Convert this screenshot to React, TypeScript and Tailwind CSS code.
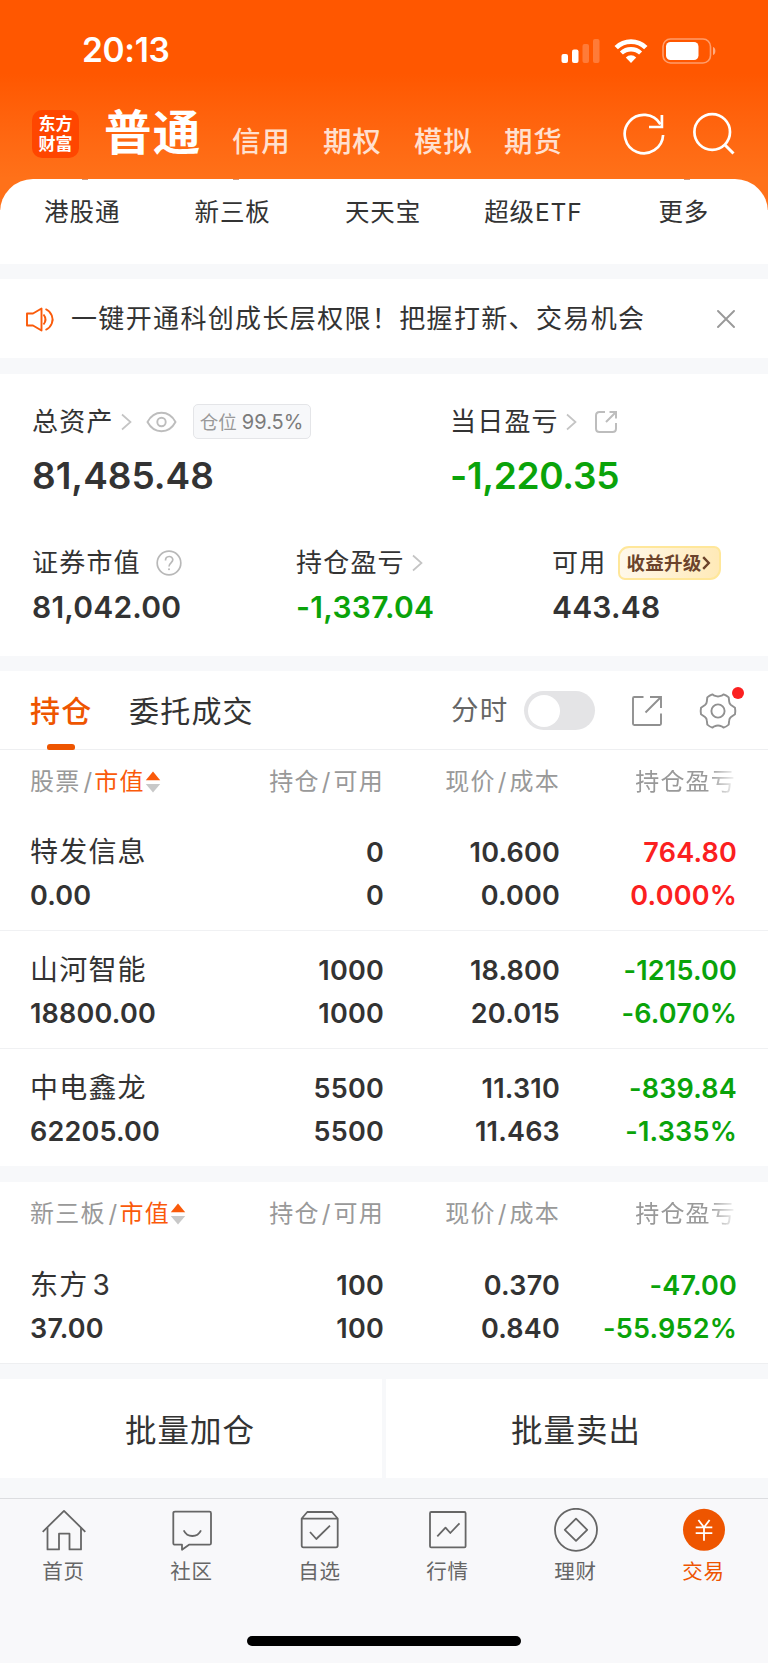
import type { ReactNode } from 'react';

const quickLinks = [
  { label: '港股通', peek: true },
  { label: '新三板', peek: true },
  { label: '天天宝', peek: false },
  { label: '超级ETF', peek: false },
  { label: '更多', peek: true },
];

type Holding = {
  name: string;
  value: string;
  held: string;
  usable: string;
  price: string;
  cost: string;
  profit: string;
  rate: string;
  up?: boolean;
};

const stocks: Holding[] = [
  { name: '特发信息', value: '0.00', held: '0', usable: '0', price: '10.600', cost: '0.000', profit: '764.80', rate: '0.000%', up: true },
  { name: '山河智能', value: '18800.00', held: '1000', usable: '1000', price: '18.800', cost: '20.015', profit: '-1215.00', rate: '-6.070%' },
  { name: '中电鑫龙', value: '62205.00', held: '5500', usable: '5500', price: '11.310', cost: '11.463', profit: '-839.84', rate: '-1.335%' },
];

const boardStocks: Holding[] = [
  { name: '东方 3', value: '37.00', held: '100', usable: '100', price: '0.370', cost: '0.840', profit: '-47.00', rate: '-55.952%' },
];

function Chevron({ className = '' }: { className?: string }) {
  return (
    <svg className={`h-[18px] w-[11px] shrink-0 ${className}`} viewBox="0 0 11 18" fill="none" stroke="#c4c4c4" strokeWidth="1.7">
      <path d="M1 1.5 L9.5 9 L1 16.5" />
    </svg>
  );
}

function StatusBar() {
  return (
    <div className="flex h-[102px] items-center pl-[82px] text-white">
      <span className="w-[479px] text-[33.5px] leading-none font-semibold tracking-[-0.3px]">20:13</span>
      <svg className="h-6 w-[39px]" viewBox="0 0 39 24" fill="#fff">
        <rect x="0.5" y="15" width="6.5" height="9" rx="2" />
        <rect x="11" y="10.5" width="6.5" height="13.5" rx="2" />
        <rect x="21.5" y="5" width="6.5" height="19" rx="2" opacity=".22" />
        <rect x="32" y="0" width="6.5" height="24" rx="2" opacity=".22" />
      </svg>
      <svg className="ml-[14px] h-6 w-[34px]" viewBox="0 0 34 24" fill="none" stroke="#fff">
        <path d="M2.2 8.6 A21.2 21.2 0 0 1 31.8 8.6" strokeWidth="4.8" />
        <path d="M7.4 14 A14 14 0 0 1 26.6 14" strokeWidth="4.4" />
        <path d="M17 24 L11.8 18.4 A7.6 7.6 0 0 1 22.2 18.4 Z" fill="#fff" stroke="none" />
      </svg>
      <svg className="ml-[14px] h-[26px] w-[55px]" viewBox="0 0 55 26" fill="none">
        <rect x="1" y="1" width="47.5" height="24" rx="7.5" stroke="#fff" strokeOpacity=".42" strokeWidth="1.6" />
        <rect x="4" y="4" width="32.5" height="18" rx="4.5" fill="#fff" />
        <path d="M51 9 C54.2 10 54.2 16 51 17 Z" fill="#fff" opacity=".5" />
      </svg>
    </div>
  );
}

function Header() {
  return (
    <div className="flex h-[108px] items-start text-white">
      <div className="mt-2 ml-8 flex h-[48px] w-[47px] flex-col items-center justify-center rounded-[10px] bg-[#ff4600] text-[17px] leading-[20px] font-bold">
        <span>东方</span>
        <span>财富</span>
      </div>
      <div className="mt-[7px] ml-[25px] w-[128px] text-[47.5px] leading-[48px] font-bold tracking-[1.3px] whitespace-nowrap">普通</div>
      <div className="mt-[25px] flex w-[391px] shrink-0 text-[28.5px] leading-[30px] font-medium tracking-[0.8px] text-[#ffe0d0]">
        <span className="w-[91px]">信用</span>
        <span className="w-[91px]">期权</span>
        <span className="w-[90px]">模拟</span>
        <span className="w-[91px]">期货</span>
      </div>
      <svg className="mt-[11px] h-[42px] w-[42px] shrink-0" viewBox="0 0 42 42" fill="none" stroke="#fff" strokeWidth="2.7">
        <path d="M40.1 22 A19.2 19.2 0 1 1 37.4 11.2" />
        <path d="M38.9 2 V14 H26" />
      </svg>
      <svg className="mt-[10px] ml-[28px] h-[43px] w-[43px] shrink-0" viewBox="0 0 43 43" fill="none" stroke="#fff" strokeWidth="2.7">
        <circle cx="19.2" cy="20" r="17.8" />
        <path d="M31.5 32.5 L40.5 41.5" strokeWidth="3" />
      </svg>
    </div>
  );
}

function Gap({ className = 'h-4' }: { className?: string }) {
  return <div className={`bg-[#f7f8fa] ${className}`} />;
}

function Summary() {
  return (
    <section className="h-[282px] bg-white pl-8 text-[26px] tracking-[1.2px]">
      <div className="flex h-[94px] items-center pt-[1px]">
        <div className="flex w-[418px] items-center">
          <span>总资产</span>
          <Chevron className="ml-[7px]" />
          <svg className="ml-[14px] h-[22px] w-[31px]" viewBox="0 0 31 22" fill="none" stroke="#bdbdbd" strokeWidth="1.9">
            <path d="M1.5 11 C5 4.5 9.5 1.8 15.5 1.8 C21.5 1.8 26 4.5 29.5 11 C26 17.5 21.5 20.2 15.5 20.2 C9.5 20.2 5 17.5 1.5 11 Z" />
            <circle cx="15.5" cy="11" r="4.2" />
          </svg>
          <span className="ml-4 flex h-[35px] w-[118px] items-center justify-center rounded-[5px] border border-[#e4e5e8] bg-[#f7f8fa] pt-px text-[18.5px] tracking-normal text-[#999]">
            仓位<span className="ml-[5px] text-[20px] text-[#7b7b7b]">99.5%</span>
          </span>
        </div>
        <span>当日盈亏</span>
        <Chevron className="ml-[7px]" />
        <svg className="ml-[17px] h-6 w-6" viewBox="0 0 24 24" fill="none" stroke="#bdbdbd" strokeWidth="2">
          <path d="M11 2 H5.5 Q2 2 2 5.5 V18.5 Q2 22 5.5 22 H18.5 Q22 22 22 18.5 V13" />
          <path d="M12 12 L22 2 M15.5 2 H22 V8.5" />
        </svg>
      </div>
      <div className="flex h-[14px] items-center text-[37px] font-semibold tracking-[0px]">
        <span className="w-[418px]">81,485.48</span>
        <span className="tracking-[-0.3px] text-[#0aa30a]">-1,220.35</span>
      </div>
      <div className="mt-[66px] flex h-[30px] items-center">
        <div className="flex w-[264px] items-center">
          <span>证券市值</span>
          <svg className="ml-[15px] h-[26px] w-[26px]" viewBox="0 0 26 26" fill="none" stroke="#b8b8b8" strokeWidth="1.7">
            <circle cx="13" cy="13" r="11.8" />
            <path d="M9.5 10.6 C9.5 5.2 16.8 5.4 16.8 9.8 C16.8 12.8 13 12.9 13 16.4" />
            <circle cx="13" cy="19.3" r="1" fill="#b8b8b8" stroke="none" />
          </svg>
        </div>
        <div className="flex w-[256px] items-center">
          <span>持仓盈亏</span>
          <Chevron className="ml-[7px]" />
        </div>
        <span>可用</span>
        <span className="ml-[12px] flex h-[34px] w-[103px] items-center rounded-tl-[11px] rounded-tr-[7px] rounded-br-[11px] rounded-bl-[7px] border-2 border-[#ffe79a] bg-linear-to-r from-[#fff8ea] to-[#ffeab8] pl-[6px] text-[18.5px] font-bold tracking-[0.3px] text-[#6b432b]">
          收益升级
          <svg className="h-[14px] w-[9px]" viewBox="0 0 9 14" fill="none" stroke="#6b432b" strokeWidth="2.4">
            <path d="M1.2 1.2 L6.8 7 L1.2 12.8" />
          </svg>
        </span>
      </div>
      <div className="mt-[14px] flex h-[30px] items-center text-[30px] font-semibold tracking-[0.2px]">
        <span className="w-[264px]">81,042.00</span>
        <span className="w-[256px] tracking-[0.3px] text-[#0aa30a]">-1,337.04</span>
        <span>443.48</span>
      </div>
    </section>
  );
}

function Tabs() {
  return (
    <div className="flex h-[79px] items-center border-b border-[#eeeff1] pt-[1px] pl-[30px] text-[30px] tracking-[1.2px]">
      <div className="relative flex h-full w-[99px] items-center font-medium text-[#ee5500]">
        持仓
        <span className="absolute bottom-[-1px] left-[17px] h-[6px] w-7 rounded-t-[3px] rounded-b-[2px] bg-[#ee5500]" />
      </div>
      <span className="w-[322px]">委托成交</span>
      <span className="w-[73px] text-[27.5px] text-[#666]">分时</span>
      <div className="flex h-[39px] w-[71px] items-center rounded-full bg-[#e4e4e6] pl-1">
        <span className="h-8 w-8 rounded-full bg-white" />
      </div>
      <svg className="ml-[36px] h-8 w-8" viewBox="0 0 32 32" fill="none" stroke="#909090" strokeWidth="1.9">
        <path d="M12.5 2 H3.2 Q2 2 2 3.2 V28.8 Q2 30 3.2 30 H28.8 Q30 30 30 28.8 V18.5" />
        <path d="M14.5 17.5 L29.5 2.5 M19 2 H30 V13" />
      </svg>
      <div className="relative ml-[36px] h-9 w-[38px]">
        <svg className="h-9 w-[38px]" viewBox="-19 -18 38 36" fill="none" stroke="#909090" strokeWidth="1.9" strokeLinejoin="round">
          <path d="M17 -3.2 Q17.6 0 17 3.2 L13 6 Q11.3 7.3 11.2 9.4 L10.7 13.6 Q8.5 15.6 5.6 16.6 L3.6 15.3 Q0 13.8 -3.6 15.3 L-5.6 16.6 Q-8.5 15.6 -10.7 13.6 L-11.2 9.4 Q-11.3 7.3 -13 6 L-17 3.2 Q-17.6 0 -17 -3.2 L-13 -6 Q-11.3 -7.3 -11.2 -9.4 L-10.7 -13.6 Q-8.5 -15.6 -5.6 -16.6 L-3.6 -15.3 Q0 -13.8 3.6 -15.3 L5.6 -16.6 Q8.5 -15.6 10.7 -13.6 L11.2 -9.4 Q11.3 -7.3 13 -6 Z" />
          <circle cx="0" cy="0" r="6.6" />
        </svg>
        <span className="absolute -top-[6px] -right-[7px] h-3 w-3 rounded-full bg-[#fb2020]" />
      </div>
    </div>
  );
}

function TableHead({ title }: { title: string }) {
  return (
    <div className="grid h-[66px] grid-cols-[178px_176px_176px_177px] items-center pb-[2px] pl-[30px] text-right text-[24px] tracking-[1.2px] whitespace-nowrap text-[#999]">
      <div className="flex items-center text-left">
        {title}
        <span className="mr-[1px] ml-[3px]">/</span>
        <span className="text-[#fa5a0a]">市值</span>
        <svg className="h-[22px] w-4" viewBox="0 0 16 22">
          <path d="M8 0.5 L15.2 9.3 H0.8 Z" fill="#fa5a0a" />
          <path d="M8 21.5 L15.2 13 H0.8 Z" fill="#c8c8c8" />
        </svg>
      </div>
      <div>持仓<span className="mx-[2px]">/</span>可用</div>
      <div>现价<span className="mx-[2px]">/</span>成本</div>
      <div className="pr-[1px] [mask-image:linear-gradient(to_right,black_84%,transparent_101%)]">持仓盈亏</div>
    </div>
  );
}

function Pair({ top, bottom, className = '' }: { top: string; bottom: string; className?: string }) {
  return (
    <div className={`flex flex-col text-right ${className}`}>
      <span className="h-[43px]">{top}</span>
      <span className="h-[43px]">{bottom}</span>
    </div>
  );
}

function Row({ item, last }: { item: Holding; last?: boolean }) {
  return (
    <div
      className={`grid grid-cols-[178px_176px_176px_177px] items-start pt-[18px] pl-[30px] text-[27px] leading-[43px] font-semibold tracking-[0.2px] ${last ? 'h-[117px]' : 'h-[118px] border-b border-[#f0f1f3]'}`}
    >
      <div className="flex flex-col">
        <span className="h-[43px] text-[28px] font-normal tracking-[1.2px] [word-spacing:-5px]">{item.name}</span>
        <span className="h-[43px]">{item.value}</span>
      </div>
      <Pair top={item.held} bottom={item.usable} />
      <Pair top={item.price} bottom={item.cost} />
      <Pair top={item.profit} bottom={item.rate} className={item.up ? 'text-[#fb2020]' : 'text-[#0aa30a]'} />
    </div>
  );
}

function NavItem({ label, active, children }: { label: string; active?: boolean; children: ReactNode }) {
  return (
    <div className={`flex flex-1 flex-col items-center pt-[9px] pr-px ${active ? 'text-[#ee5500]' : 'text-[#666]'}`}>
      <svg className="h-11 w-11" viewBox="0 0 44 44" fill="none" stroke="currentColor" strokeWidth="1.8" strokeLinejoin="round">
        {children}
      </svg>
      <span className="mt-[8px] text-[20.5px] leading-6 tracking-[0.8px]">{label}</span>
    </div>
  );
}

export default function App() {
  return (
    <div className="h-[1663px] w-[768px] overflow-hidden bg-white font-[Inter,'Noto_Sans_CJK_SC',sans-serif] leading-none text-[#333]">
      <div className="h-[210px] bg-linear-to-b from-[#ff5700] from-35% to-[#ff7119] to-85%">
        <StatusBar />
        <Header />
      </div>

      <section className="relative mt-[-31px] grid h-[85px] grid-cols-5 rounded-t-[33px] bg-white pr-[9px] pl-[7px] text-center text-[24.5px] tracking-[0.9px]">
        {quickLinks.map((q) => (
          <div key={q.label} className="relative pt-[21px] leading-6">
            {q.peek && <span className="absolute top-0 left-1/2 h-px w-1.5 bg-[#d09a80]" />}
            {q.label}
          </div>
        ))}
      </section>

      <Gap className="h-[15px]" />
      <section className="flex h-[79px] items-center bg-white pt-[1px] pl-[25px]">
        <svg className="h-[25px] w-[30px]" viewBox="0 0 30 25" fill="none" stroke="#fa5a0a" strokeWidth="1.9" strokeLinejoin="round">
          <path d="M2 6.5 H8 L16.5 1.5 V23.5 L8 18.5 H2 Z" />
          <path d="M18.5 7.5 Q22.5 12.5 18.5 17.5" />
          <path d="M20.5 2 Q25 4 26.8 8.5 Q28.5 12.5 26.8 16.5 Q25 21 20.5 23" />
        </svg>
        <span className="ml-4 w-[646px] text-[26px] tracking-[1.35px] whitespace-nowrap">一键开通科创成长层权限！把握打新、交易机会</span>
        <svg className="h-[18px] w-[18px] shrink-0" viewBox="0 0 18 18" stroke="#999" strokeWidth="1.9" strokeLinecap="round">
          <path d="M1 1 L17 17 M17 1 L1 17" />
        </svg>
      </section>
      <Gap />

      <Summary />
      <Gap className="h-[15px]" />

      <section className="bg-white">
        <Tabs />
        <TableHead title="股票" />
        <div className="-mt-[3px]">
          {stocks.map((s, i) => (
            <Row key={s.name} item={s} last={i === stocks.length - 1} />
          ))}
        </div>
      </section>
      <Gap className="h-4" />

      <section className="bg-white">
        <TableHead title="新三板" />
        <div className="-mt-[2px]">
          <Row item={boardStocks[0]} last />
        </div>
      </section>
      <Gap className="h-4 border-t border-[#eeeff1]" />

      <div className="flex h-[99px] gap-1 bg-[#f7f8fa] text-[31.5px] tracking-[1px]">
        <button className="w-[382px] bg-white pt-1 pr-0.5">批量加仓</button>
        <button className="w-[382px] bg-white pt-1 pr-0.5">批量卖出</button>
      </div>
      <Gap className="h-5" />

      <nav className="h-[165px] border-t border-[#dcdde0] bg-[#f8f8fa]">
        <div className="flex h-[137px]">
          <NavItem label="首页">
            <path d="M0.7 23.8 L22 2.9 L43.3 23.8" />
            <path d="M5.5 19.5 V41.4 H17 V25.7 H27.5 V41.4 H39 V19.5" />
          </NavItem>
          <NavItem label="社区">
            <path d="M5 3.7 H39.5 Q41 3.7 41 5.2 V35.2 Q41 36.7 39.5 36.7 H19 L12 41.8 V36.7 H5 Q3.3 36.7 3.3 35.2 V5.2 Q3.3 3.7 5 3.7 Z" />
            <path d="M13.7 22.3 Q16.5 28 22.4 28 Q28.2 28 31 22.3" />
          </NavItem>
          <NavItem label="自选">
            <path d="M3.7 10.5 L9.3 4 H34 L39.7 10.5 V37.5 Q39.7 39.3 38 39.3 H5.4 Q3.7 39.3 3.7 37.5 Z M3.7 10.7 H39.7" />
            <path d="M12 24 L18.3 31 L32 17.7" />
          </NavItem>
          <NavItem label="行情">
            <rect x="4" y="4" width="35.6" height="35.4" rx="1.2" />
            <path d="M11.3 28.3 L19.5 19.7 L24.3 25 L33.5 15.3" />
          </NavItem>
          <NavItem label="理财">
            <circle cx="22" cy="21.8" r="21" />
            <path d="M22 10.7 L33.2 21.8 L22 32.9 L10.8 21.8 Z" />
          </NavItem>
          <NavItem label="交易" active>
            <circle cx="22" cy="21.8" r="21" fill="currentColor" stroke="none" />
            <path d="M16.4 12 L22 19.3 L27.6 12 M22 19.3 V32.7 M13.7 19.3 H30.3 M13.7 25.2 H30.3" stroke="#fff" strokeWidth="1.8" />
          </NavItem>
        </div>
        <div className="mx-auto h-[10px] w-[274px] rounded-full bg-black" />
      </nav>
    </div>
  );
}
